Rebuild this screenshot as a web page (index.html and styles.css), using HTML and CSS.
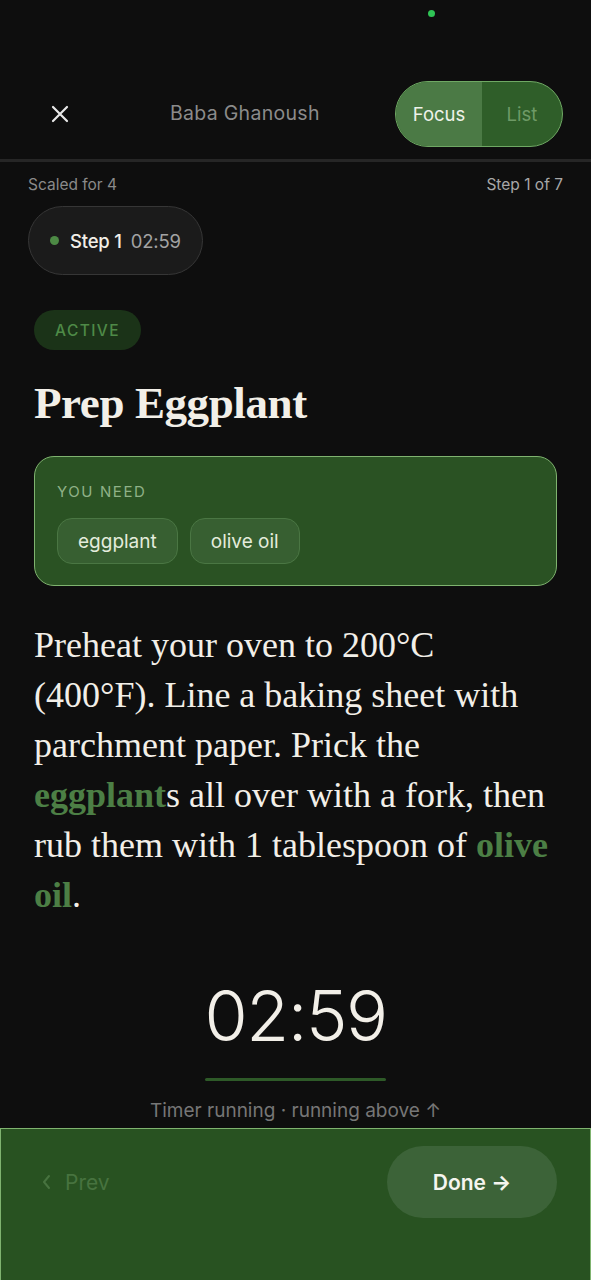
FILE: index.html
```html
<!DOCTYPE html>
<html>
<head>
  <title>Baba Ghanoush - Cook</title>
  <link rel="stylesheet" href="styles.css">
</head>
<body>
  <div class="status"><span class="cam-dot"></span></div>

  <header class="topbar">
    <button class="close" aria-label="Close">
      <svg width="20" height="20" viewBox="0 0 20 20"><path d="M3 3 L17 17 M17 3 L3 17" stroke="#e8e8e8" stroke-width="2.2" stroke-linecap="round"/></svg>
    </button>
    <div class="title">Baba Ghanoush</div>
    <div class="toggle">
      <span class="seg on">Focus</span>
      <span class="seg">List</span>
    </div>
  </header>

  <main class="content">
    <div class="meta">
      <span>Scaled for 4</span>
      <span class="meta-step">Step 1 of 7</span>
    </div>

    <div class="step-chip">
      <span class="dot"></span>
      <span class="chip-step">Step 1</span>
      <span class="chip-time">02:59</span>
    </div>

    <div class="badge">ACTIVE</div>

    <h1>Prep Eggplant</h1>

    <div class="need">
      <div class="need-label">YOU NEED</div>
      <div class="need-list">
        <span class="ing">eggplant</span>
        <span class="ing">olive oil</span>
      </div>
    </div>

    <p class="instr">Preheat your oven to 200°C (400°F). Line a baking sheet with parchment paper. Prick the <b>eggplant</b>s all over with a fork, then rub them with 1 tablespoon of <b>olive oil</b>.</p>

    <div class="timer">
      <div class="timer-num">02:59</div>
      <div class="timer-bar"></div>
      <div class="timer-note">Timer running · running above ↑</div>
    </div>
  </main>

  <footer class="bottom">
    <button class="prev">
      <svg width="12" height="18" viewBox="0 0 12 18"><path d="M8 3 L3 9 L8 15" fill="none" stroke="#47733f" stroke-width="2" stroke-linecap="round" stroke-linejoin="round"/></svg>
      Prev
    </button>
    <button class="done">Done <span class="arrow">→</span></button>
  </footer>
</body>
</html>
```

FILE: styles.css
```css
* { box-sizing: border-box; }
html, body { background: #0e0e0e; }
body { margin: 0; width: 591px; min-height: 1280px; font-family: Inter, "Noto Sans", sans-serif; color: #f2efe8; display: flex; flex-direction: column; }
button { font-family: inherit; background: none; border: none; padding: 0; cursor: pointer; }

.status { height: 81px; position: relative; }
.cam-dot { position: absolute; left: 428px; top: 10px; width: 7px; height: 7px; border-radius: 50%; background: #2fc455; }

.topbar { height: 81px; padding: 0 28px 15px 40px; display: flex; align-items: flex-start; border-bottom: 3px solid #262626; }
.close { width: 40px; height: 65px; display: flex; align-items: center; justify-content: center; }
.title { flex: 1; height: 65px; line-height: 65px; font-size: 19.5px; color: #8b8b8b; padding-left: 90px; letter-spacing: 0.3px; }
.toggle { display: flex; height: 66px; border: 1.5px solid #6fa864; border-radius: 33px; overflow: hidden; background: #2f5e29; }
.seg { display: flex; align-items: center; justify-content: center; font-size: 18.5px; color: #6e9a66; width: 80px; }
.seg.on { background: #4b7a45; color: #eef2ea; width: 86px; }

.content { flex: 1; padding: 0 34px 0 34px; }
.meta { display: flex; justify-content: space-between; font-size: 15.5px; color: #8a8a8a; padding: 14px 0 0 0; margin-left: -6px; line-height: 18px; }
.meta-step { color: #a8a8a8; margin-right: -6px; }

.step-chip { margin: 12px 0 0 -6px; display: inline-flex; align-items: center; height: 69px; padding: 0 21px; border: 1px solid #363636; border-radius: 35px; background: #1b1b1b; }
.dot { width: 9px; height: 9px; border-radius: 50%; background: #4d8a45; margin-right: 11px; }
.chip-step { font-size: 18.5px; font-weight: 500; color: #f2efe8; margin-right: 9px; letter-spacing: -0.2px; }
.chip-time { font-size: 18.5px; color: #a3a3a3; letter-spacing: -0.2px; }

.badge { margin-top: 35px; width: 107px; height: 40px; border-radius: 20px; background: #1b3318; color: #4e8a47; font-size: 15.5px; font-weight: 500; letter-spacing: 1.4px; display: flex; align-items: center; justify-content: center; }

h1 { font-family: "Liberation Serif", "DejaVu Serif", serif; font-weight: 700; font-size: 45px; margin: 28px 0 0 0; line-height: 50px; letter-spacing: -0.4px; }

.need { margin-top: 28px; height: 130px; border: 1px solid #7fb36f; border-radius: 20px; background: #2a5223; padding: 26px 22px 0 22px; }
.need-label { font-size: 15px; color: #8fb187; letter-spacing: 1.6px; line-height: 17px; }
.need-list { display: flex; gap: 12px; margin-top: 18px; }
.ing { height: 46px; display: flex; align-items: center; padding: 0 20px; font-size: 19px; color: #e4ecdc; background: #375f31; border: 1px solid #4a7643; border-radius: 15px; }

.instr { font-family: "Liberation Serif", "DejaVu Serif", serif; font-size: 36px; line-height: 50px; margin: 34px 0 0 0; color: #f2efe8; }
.instr b { color: #4c7f45; }

.timer { display: flex; flex-direction: column; align-items: center; margin-top: 56px; }
.timer-num { font-size: 70px; font-weight: 300; line-height: 80px; letter-spacing: -1.5px; }
.timer-bar { width: 181px; height: 3px; background: #2e5a28; border-radius: 2px; margin-top: 22px; }
.timer-note { font-size: 19px; color: #767676; margin-top: 18px; }

.bottom { height: 153px; margin-top: 6px; background: #285221; border: 1px solid #7fb36f; border-bottom: none; display: flex; justify-content: space-between; align-items: flex-start; padding: 17px 33px 0 40px; }
.prev { display: flex; align-items: center; gap: 12px; height: 72px; font-size: 21px; color: #47733f; }
.done { width: 170px; height: 72px; border-radius: 36px; background: #3c6338; color: #f5f5ef; font-size: 21px; font-weight: 600; }
.arrow { font-weight: 700; }
```
